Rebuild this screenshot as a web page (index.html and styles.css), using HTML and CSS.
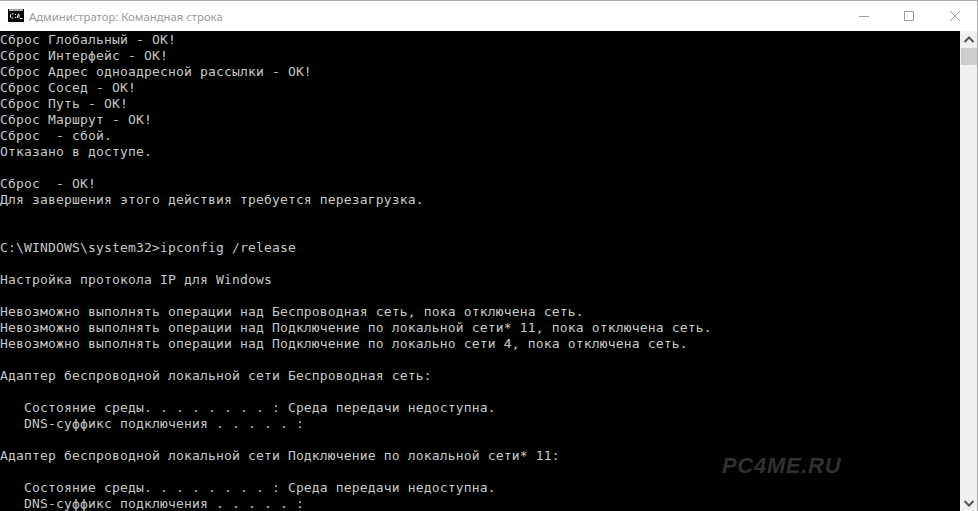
FILE: index.html
```html
<!DOCTYPE html>
<html lang="ru">
<head>
<meta charset="utf-8">
<title>Командная строка</title>
<link rel="stylesheet" href="styles.css">
</head>
<body>
<div class="window">
  <header class="titlebar">
    <svg class="app-icon" width="16" height="13" viewBox="0 0 16 13"><rect width="16" height="13" fill="#000"/><rect x="1" y="0" width="14" height="2" fill="#a8a8a8"/><path d="M3.5 5H5.5M2.5 5.5V8.5M3.5 9H5.5M7.5 5V6M7.5 8V9M10.5 5L9 9M10.5 5H11V9M12 9.5H14.5" stroke="#f2f2f2" stroke-width="1" fill="none"/></svg>
    <span class="title">Администратор: Командная строка</span>
    <div class="controls">
      <svg class="ctl" width="46" height="30" viewBox="0 0 46 30"><path d="M19 15.5H29" stroke="#a0a0a0" fill="none"/></svg>
      <svg class="ctl" width="46" height="30" viewBox="0 0 46 30"><rect x="18.5" y="10.5" width="9" height="9" stroke="#a0a0a0" fill="none"/></svg>
      <svg class="ctl" width="45" height="30" viewBox="0 0 45 30"><path d="M18 10L28 20M28 10L18 20" stroke="#a0a0a0" fill="none"/></svg>
    </div>
  </header>
  <div class="body">
    <pre class="console">Сброс Глобальный - ОК!
Сброс Интерфейс - ОК!
Сброс Адрес одноадресной рассылки - ОК!
Сброс Сосед - ОК!
Сброс Путь - ОК!
Сброс Маршрут - ОК!
Сброс  - сбой.
Отказано в доступе.

Сброс  - ОК!
Для завершения этого действия требуется перезагрузка.


C:\WINDOWS\system32&gt;ipconfig /release

Настройка протокола IP для Windows

Невозможно выполнять операции над Беспроводная сеть, пока отключена сеть.
Невозможно выполнять операции над Подключение по локальной сети* 11, пока отключена сеть.
Невозможно выполнять операции над Подключение по локально сети 4, пока отключена сеть.

Адаптер беспроводной локальной сети Беспроводная сеть:

   Состояние среды. . . . . . . . : Среда передачи недоступна.
   DNS-суффикс подключения . . . . . :

Адаптер беспроводной локальной сети Подключение по локальной сети* 11:

   Состояние среды. . . . . . . . : Среда передачи недоступна.
   DNS-суффикс подключения . . . . . :</pre>
    <span class="watermark">PC4ME.RU</span>
    <aside class="scrollbar">
      <svg class="arrow" width="17" height="17" viewBox="0 0 17 17"><path d="M4.5 11L9 6.5L13.5 11" stroke="#555" stroke-width="2" fill="none"/></svg>
      <div class="thumb"></div>
      <div class="track"></div>
      <svg class="arrow" width="17" height="17" viewBox="0 0 17 17"><path d="M4.5 7L9 11.5L13.5 7" stroke="#555" stroke-width="2" fill="none"/></svg>
    </aside>
  </div>
</div>
</body>
</html>
```
FILE: styles.css
```css
html, body { margin: 0; padding: 0; height: 100%; overflow: hidden; background: #000; }
.window { display: flex; flex-direction: column; width: 978px; height: 511px; box-sizing: border-box; border-right: 1px solid #acacac; }
.titlebar { display: flex; align-items: center; height: 30px; flex: none; background: #fff; border-top: 1px solid #acacac; box-sizing: content-box; padding-left: 8px; }
.app-icon { flex: none; margin-right: 5px; margin-bottom: 2px; }
.title { font: 11.3px "Noto Sans", "Open Sans", sans-serif; color: #9a9a9a; white-space: nowrap; }
.controls { display: flex; margin-left: auto; }
.ctl { display: block; }
.body { position: relative; display: flex; flex: 1; min-height: 0; }
.console { flex: 1; margin: 0; padding-top: 1px; overflow: hidden; color: #c8c8c8; font: 13px/16px "DejaVu Sans Mono", monospace; letter-spacing: .17px; }
.watermark { position: absolute; left: 722px; top: 422px; font: italic bold 22px "Liberation Sans", sans-serif; letter-spacing: .7px; color: #303030; }
.scrollbar { display: flex; flex-direction: column; flex: none; width: 17px; background: #f0f0f0; }
.arrow { flex: none; display: block; }
.thumb { height: 17px; flex: none; margin-left: 1px; background: #cdcdcd; }
.track { flex: 1; }
```
